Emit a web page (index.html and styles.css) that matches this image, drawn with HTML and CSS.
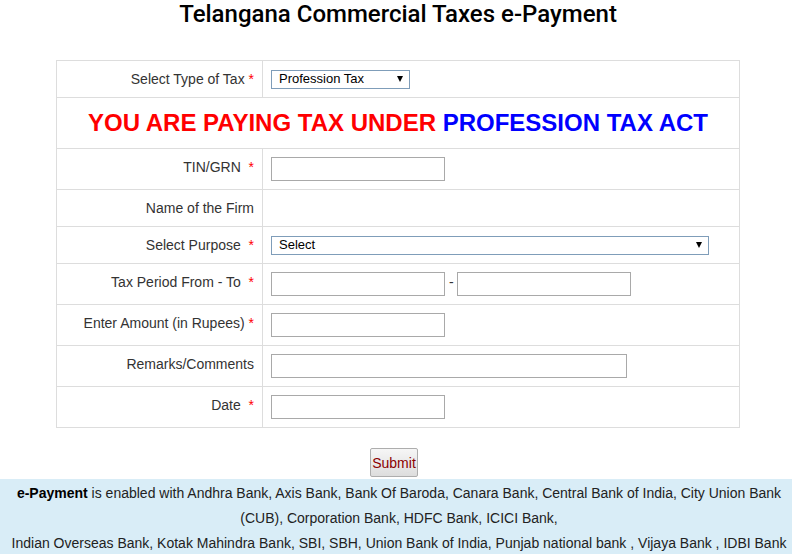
FILE: index.html
```html
<!DOCTYPE html>
<html lang="en">
<head>
    <meta charset="UTF-8">
    <title>Telangana Commercial Taxes e-Payment</title>
    <link rel="stylesheet" href="styles.css">
</head>
<body>
    <div class="page">
        <h1 class="title">Telangana Commercial Taxes e-Payment</h1>

        <form class="pay-form" onsubmit="return false;">
            <table class="pay-table">
                <tr>
                    <td class="label">Select Type of Tax <span class="req">*</span></td>
                    <td>
                        <div class="select-wrap small">
                            <select>
                                <option>Profession Tax</option>
                            </select>
                        </div>
                    </td>
                </tr>
                <tr>
                    <td colspan="2" class="banner">
                        <span class="red">YOU ARE PAYING TAX UNDER</span>
                        <span class="blue">PROFESSION TAX ACT</span>
                    </td>
                </tr>
                <tr>
                    <td class="label">TIN/GRN &nbsp;<span class="req">*</span></td>
                    <td class="input-cell"><input type="text" class="field"></td>
                </tr>
                <tr>
                    <td class="label">Name of the Firm</td>
                    <td></td>
                </tr>
                <tr>
                    <td class="label">Select Purpose &nbsp;<span class="req">*</span></td>
                    <td>
                        <div class="select-wrap wide">
                            <select>
                                <option>Select</option>
                            </select>
                        </div>
                    </td>
                </tr>
                <tr>
                    <td class="label">Tax Period From - To &nbsp;<span class="req">*</span></td>
                    <td class="input-cell"><input type="text" class="field"> - <input type="text" class="field"></td>
                </tr>
                <tr>
                    <td class="label">Enter Amount (in Rupees) <span class="req">*</span></td>
                    <td class="input-cell"><input type="text" class="field"></td>
                </tr>
                <tr>
                    <td class="label">Remarks/Comments</td>
                    <td class="input-cell"><input type="text" class="field long"></td>
                </tr>
                <tr>
                    <td class="label">Date &nbsp;<span class="req">*</span></td>
                    <td class="input-cell"><input type="text" class="field"></td>
                </tr>
            </table>

            <div class="actions">
                <button type="submit" class="submit-btn">Submit</button>
            </div>
        </form>

        <div class="banks">
            <b>e-Payment</b> is enabled with Andhra Bank, Axis Bank, Bank Of Baroda, Canara Bank, Central Bank of India, City Union Bank (CUB), Corporation Bank, HDFC Bank, ICICI Bank,<br>
            Indian Overseas Bank, Kotak Mahindra Bank, SBI, SBH, Union Bank of India, Punjab national bank , Vijaya Bank , IDBI Bank
        </div>
    </div>
</body>
</html>
```

FILE: styles.css
```css
body {
    margin: 0;
    padding: 0;
    background: #fff;
    color: #333;
    font-family: "Liberation Sans", Arial, sans-serif;
    font-size: 14px;
    overflow: hidden;
}

.page {
    padding-left: 4px;
}

.title {
    margin: 0;
    padding: 0;
    height: 60px;
    font-family: Roboto, "Liberation Sans", sans-serif;
    font-size: 24px;
    font-weight: 500;
    line-height: 28px;
    color: #000;
    text-align: center;
}

.pay-table {
    width: 684px;
    margin: 0 auto;
    border-collapse: collapse;
}

.pay-table td {
    border: 1px solid #ddd;
    padding: 8px;
    height: 20px;
    line-height: 20px;
    vertical-align: middle;
}

.pay-table td.label {
    width: 206px;
    text-align: right;
    vertical-align: top;
    box-sizing: border-box;
}

.pay-table td.input-cell {
    height: 24px;
    padding-top: 8px;
    padding-bottom: 8px;
}

.req {
    color: red;
}

.pay-table td.banner {
    height: 34px;
    text-align: center;
    font-size: 24px;
    font-weight: bold;
    line-height: 34px;
}

.banner .red {
    color: #ff0000;
}

.banner .blue {
    color: #0000ff;
}

.field {
    box-sizing: border-box;
    width: 174px;
    height: 24px;
    margin: 0;
    padding: 2px 4px;
    border: 1px solid #a9a9a9;
    font-family: inherit;
    font-size: 13px;
    vertical-align: top;
}

.field.long {
    width: 356px;
}

/* selects are drawn flat with a small black arrow */
.select-wrap {
    position: relative;
    display: block;
}

.select-wrap select {
    -webkit-appearance: none;
    appearance: none;
    box-sizing: border-box;
    width: 100%;
    height: 19px;
    margin: 0;
    padding: 0 0 1px 7px;
    border: 1px solid #7f9db9;
    border-radius: 0;
    background: #fff;
    color: #000;
    font-family: "Liberation Sans", Arial, sans-serif;
    font-size: 13px;
    line-height: 16px;
    display: block;
}

.select-wrap::after {
    content: "";
    position: absolute;
    right: 7px;
    top: 6px;
    border-left: 3.5px solid transparent;
    border-right: 3.5px solid transparent;
    border-top: 6px solid #000;
    pointer-events: none;
}

.select-wrap.small {
    width: 139px;
}

.select-wrap.wide {
    width: 438px;
}

.actions {
    text-align: center;
    padding: 20px 0 0;
    height: 31px;
}

.submit-btn {
    height: 29px;
    padding: 0 1px;
    border: 1px solid #adadad;
    border-radius: 2px;
    background: linear-gradient(#f6f6f6, #dddddd);
    color: #8b0000;
    font-family: "Liberation Sans", Arial, sans-serif;
    font-size: 14px;
    margin-right: 8px;
}

.banks {
    margin-left: -4px;
    background: #d9edf7;
    padding: 2px 5px 10px 11px;
    text-align: center;
    line-height: 25px;
    color: #222;
}

.banks b {
    color: #000;
}
```
